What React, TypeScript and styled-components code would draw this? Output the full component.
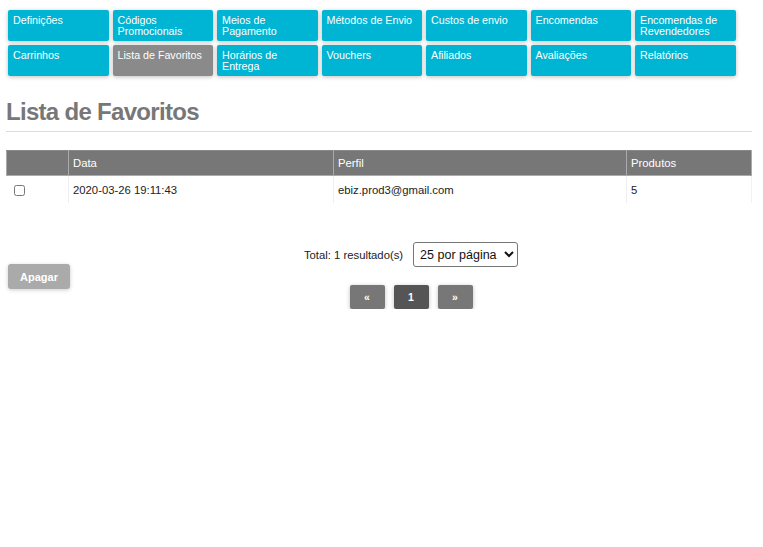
import React from "react";
import styled, { createGlobalStyle } from "styled-components";

const GlobalStyle = createGlobalStyle`
  body {
    margin: 0;
    background: #fff;
    font-family: "Liberation Sans", Arial, sans-serif;
  }
`;

const Page = styled.div`
  padding: 10px 11px 0 6px;
`;

const Nav = styled.nav`
  display: grid;
  grid-template-columns: repeat(7, 100.5px);
  column-gap: 4px;
  row-gap: 4px;
  margin-left: 2px;
`;

const Tab = styled.a<{ $active?: boolean }>`
  display: block;
  height: 31px;
  box-sizing: border-box;
  padding: 5px 5px 0 5px;
  background: ${(p) => (p.$active ? "#8a8a8a" : "#00b5d3")};
  color: #fff;
  font-size: 10.7px;
  line-height: 10.5px;
  border-radius: 2px;
  box-shadow: 0 1px 4px rgba(0, 0, 0, 0.25);
  text-decoration: none;
  cursor: pointer;
`;

const Title = styled.h1`
  margin: 22px 0 0 0;
  padding-bottom: 5px;
  border-bottom: 1px solid #ddd;
  font-size: 24px;
  line-height: 28px;
  letter-spacing: -0.7px;
  font-weight: bold;
  color: #777;
`;

const Table = styled.table`
  width: 100%;
  margin-top: 18px;
  border-collapse: collapse;
  table-layout: fixed;
  font-size: 11.3px;
`;

const HeadCell = styled.th<{ $w?: number }>`
  box-sizing: border-box;
  width: ${(p) => (p.$w ? `${p.$w}px` : "auto")};
  height: 25px;
  padding: 0 4px;
  background: #777;
  color: #fff;
  font-weight: normal;
  text-align: left;
  border: 1px solid #aaa;
  border-top-color: #888;
`;

const Cell = styled.td`
  height: 27px;
  padding: 0 4px;
  color: #222;
  border-right: 1px solid #eee;
  &:last-child {
    border-right: 1px solid #f2f2f2;
  }
`;

const Check = styled.input`
  width: 11px;
  height: 11px;
  margin: 0 0 0 3px;
  vertical-align: middle;
`;

const Footer = styled.div`
  display: flex;
  align-items: flex-start;
  margin-top: 39px;
`;

const DeleteButton = styled.button`
  margin: 22px 0 0 2px;
  width: 62px;
  height: 25px;
  border: none;
  border-radius: 3px;
  background: #aaa;
  color: #fff;
  font-family: inherit;
  font-weight: bold;
  font-size: 11px;
  box-shadow: 0 1px 4px rgba(0, 0, 0, 0.2);
`;

const Paging = styled.div`
  flex: 1;
  display: flex;
  flex-direction: column;
  align-items: center;
  gap: 18px;
`;

const TotalRow = styled.div`
  display: flex;
  align-items: center;
  gap: 10px;
  font-size: 11.3px;
  color: #222;
`;

const PerPage = styled.select`
  width: 105px;
  height: 25px;
  padding: 0 2px;
  font-family: inherit;
  font-size: 12.5px;
  color: #111;
  border: 1px solid #767676;
  border-radius: 3px;
  background: #fff;
`;

const Pages = styled.div`
  display: flex;
  gap: 9px;
`;

const PageButton = styled.button<{ $active?: boolean }>`
  width: 35px;
  height: 24px;
  border: none;
  border-radius: 2px;
  background: ${(p) => (p.$active ? "#555" : "#777")};
  color: #fff;
  font-family: inherit;
  font-weight: bold;
  font-size: 10.5px;
  box-shadow: 0 1px 4px rgba(0, 0, 0, 0.25);
`;

const tabs = [
  "Definições",
  "Códigos Promocionais",
  "Meios de Pagamento",
  "Métodos de Envio",
  "Custos de envio",
  "Encomendas",
  "Encomendas de Revendedores",
  "Carrinhos",
  "Lista de Favoritos",
  "Horários de Entrega",
  "Vouchers",
  "Afiliados",
  "Avaliações",
  "Relatórios",
];

const App = () => {
  return (
    <Page>
      <GlobalStyle />
      <Nav>
        {tabs.map((t) => (
          <Tab key={t} $active={t === "Lista de Favoritos"}>
            {t}
          </Tab>
        ))}
      </Nav>

      <Title>Lista de Favoritos</Title>

      <Table>
        <thead>
          <tr>
            <HeadCell $w={62} />
            <HeadCell $w={265}>Data</HeadCell>
            <HeadCell $w={293}>Perfil</HeadCell>
            <HeadCell>Produtos</HeadCell>
          </tr>
        </thead>
        <tbody>
          <tr>
            <Cell>
              <Check type="checkbox" />
            </Cell>
            <Cell>2020-03-26 19:11:43</Cell>
            <Cell>ebiz.prod3@gmail.com</Cell>
            <Cell>5</Cell>
          </tr>
        </tbody>
      </Table>

      <Footer>
        <DeleteButton>Apagar</DeleteButton>
        <Paging>
          <TotalRow>
            Total: 1 resultado(s)
            <PerPage defaultValue="25">
              <option value="10">10 por página</option>
              <option value="25">25 por página</option>
              <option value="50">50 por página</option>
            </PerPage>
          </TotalRow>
          <Pages>
            <PageButton>«</PageButton>
            <PageButton $active>1</PageButton>
            <PageButton>»</PageButton>
          </Pages>
        </Paging>
      </Footer>
    </Page>
  );
};

export default App;
